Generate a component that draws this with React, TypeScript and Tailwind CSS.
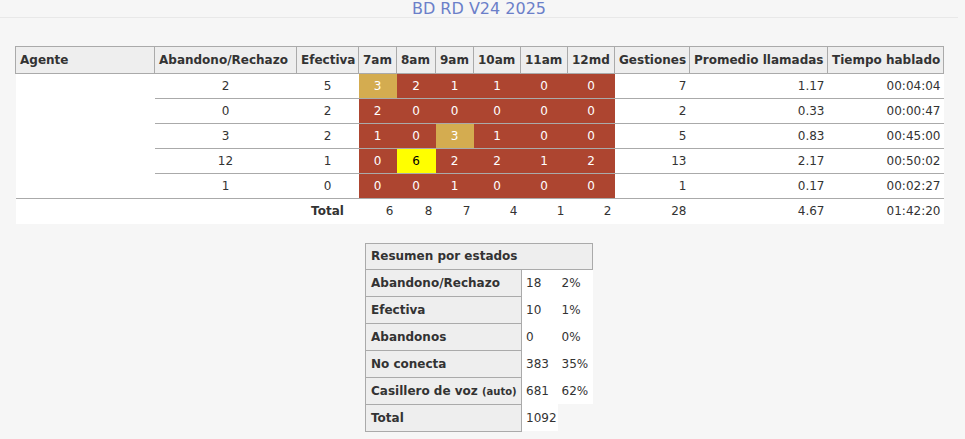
import React from "react";

type Row = {
  ab: number;
  ef: number;
  h: [number, string][];
  g: number;
  p: string;
  t: string;
};

const rows: Row[] = [
  { ab: 2, ef: 5, h: [[3, "g"], [2, "r"], [1, "r"], [1, "r"], [0, "r"], [0, "r"]], g: 7, p: "1.17", t: "00:04:04" },
  { ab: 0, ef: 2, h: [[2, "r"], [0, "r"], [0, "r"], [0, "r"], [0, "r"], [0, "r"]], g: 2, p: "0.33", t: "00:00:47" },
  { ab: 3, ef: 2, h: [[1, "r"], [0, "r"], [3, "g"], [1, "r"], [0, "r"], [0, "r"]], g: 5, p: "0.83", t: "00:45:00" },
  { ab: 12, ef: 1, h: [[0, "r"], [6, "y"], [2, "r"], [2, "r"], [1, "r"], [2, "r"]], g: 13, p: "2.17", t: "00:50:02" },
  { ab: 1, ef: 0, h: [[0, "r"], [0, "r"], [1, "r"], [0, "r"], [0, "r"], [0, "r"]], g: 1, p: "0.17", t: "00:02:27" },
];

const cellColor: Record<string, string> = {
  r: "bg-[#ad4530] text-white",
  g: "bg-[#d4ac50] text-white",
  y: "bg-[#ffff00] text-black",
};

const headers: [string, string][] = [
  ["Agente", "w-[139px]"],
  ["Abandono/Rechazo", "w-[142px]"],
  ["Efectiva", "w-[62px]"],
  ["7am", "w-[38px]"],
  ["8am", "w-[39px]"],
  ["9am", "w-[38px]"],
  ["10am", "w-[47px]"],
  ["11am", "w-[47px]"],
  ["12md", "w-[47px]"],
  ["Gestiones", "w-[75px]"],
  ["Promedio llamadas", "w-[138px]"],
  ["Tiempo hablado", "w-[116px]"],
];

const summary: [React.ReactNode, string, string][] = [
  ["Abandono/Rechazo", "18", "2%"],
  ["Efectiva", "10", "1%"],
  ["Abandonos", "0", "0%"],
  ["No conecta", "383", "35%"],
  [
    <>
      Casillero de voz <span className="text-[10px]">(auto)</span>
    </>,
    "681",
    "62%",
  ],
];

export default function App() {
  const totals = [6, 8, 7, 4, 1, 2];
  return (
    <div className="min-h-screen bg-[#f6f6f6] font-['DejaVu_Sans',Verdana,sans-serif] text-[12px] text-[#333]">
      <div className="w-[958px]">
        <div className="h-[18px] border-b border-[#e8e8e8] text-center text-[16px] leading-[18px] text-[#6b7fc9]">
          BD RD V24 2025
        </div>

        <div className="px-[15px] pt-[28px]">
          <table className="w-[928px] table-fixed border-collapse">
            <thead>
              <tr className="h-[27px]">
                {headers.map(([h, w]) => (
                  <th
                    key={h}
                    className={`${w} border border-[#aaaaaa] bg-[#eeeeee] px-[4px] text-left font-bold whitespace-nowrap`}
                  >
                    {h}
                  </th>
                ))}
              </tr>
            </thead>
            <tbody>
              {rows.map((r, i) => (
                <tr key={i} className="h-[25px]">
                  {i === 0 && (
                    <td rowSpan={5} className="border-b border-[#aaaaaa] bg-white"></td>
                  )}
                  <td className="border-b border-[#aaaaaa] bg-white text-center">{r.ab}</td>
                  <td className="border-b border-[#aaaaaa] bg-white text-center">{r.ef}</td>
                  {r.h.map(([v, c], j) => (
                    <td key={j} className={`border-b border-[#aaaaaa] text-center ${cellColor[c]}`}>
                      {v}
                    </td>
                  ))}
                  <td className="border-b border-[#aaaaaa] bg-white pr-[3px] text-right">{r.g}</td>
                  <td className="border-b border-[#aaaaaa] bg-white pr-[3px] text-right">{r.p}</td>
                  <td className="border-b border-[#aaaaaa] bg-white pr-[3px] text-right">{r.t}</td>
                </tr>
              ))}
              <tr className="h-[25px] bg-white">
                <td></td>
                <td></td>
                <td className="text-center font-bold">Total</td>
                {totals.map((v, j) => (
                  <td key={j} className="pr-[3px] text-right">
                    {v}
                  </td>
                ))}
                <td className="pr-[3px] text-right">28</td>
                <td className="pr-[3px] text-right">4.67</td>
                <td className="pr-[3px] text-right">01:42:20</td>
              </tr>
            </tbody>
          </table>
        </div>

        <div className="flex justify-center pt-[19px]">
          <table className="w-[227px] table-fixed border-collapse">
            <colgroup>
              <col className="w-[156px]" />
              <col className="w-[36px]" />
              <col className="w-[35px]" />
            </colgroup>
            <thead>
              <tr className="h-[26px]">
                <th
                  colSpan={3}
                  className="border border-[#aaaaaa] bg-[#eeeeee] px-[5px] text-left font-bold"
                >
                  Resumen por estados
                </th>
              </tr>
            </thead>
            <tbody>
              {summary.map(([label, n, pct], i) => (
                <tr key={i} className="h-[27px]">
                  <th className="border border-[#aaaaaa] bg-[#eeeeee] px-[5px] text-left font-bold whitespace-nowrap">
                    {label}
                  </th>
                  <td className="bg-white px-[4px] whitespace-nowrap">{n}</td>
                  <td className="bg-white px-[4px] whitespace-nowrap">{pct}</td>
                </tr>
              ))}
              <tr className="h-[27px]">
                <th className="border border-[#aaaaaa] bg-[#eeeeee] px-[5px] text-left font-bold">
                  Total
                </th>
                <td className="bg-white px-[4px]">1092</td>
                <td></td>
              </tr>
            </tbody>
          </table>
        </div>
      </div>
    </div>
  );
}
